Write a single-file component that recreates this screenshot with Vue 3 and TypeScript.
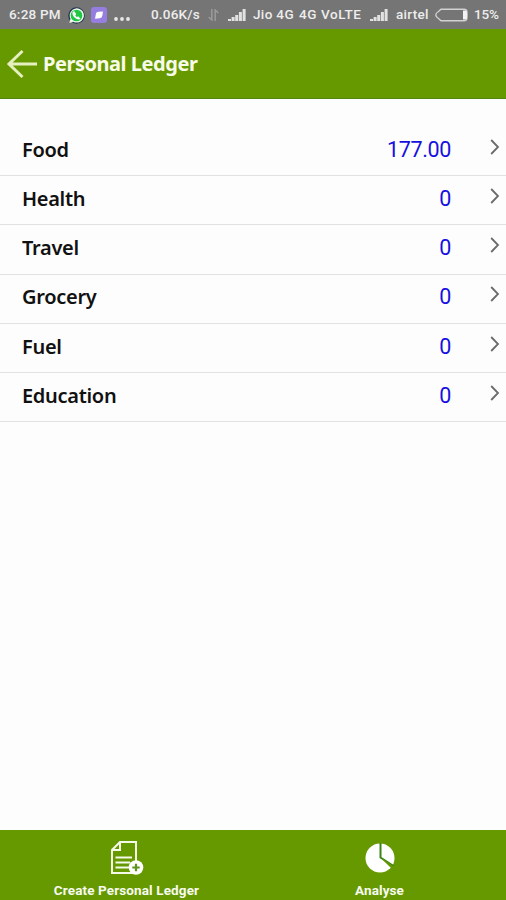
<script setup lang="ts">
interface LedgerEntry {
  name: string
  amount: string
}

const entries: LedgerEntry[] = [
  { name: 'Food', amount: '177.00' },
  { name: 'Health', amount: '0' },
  { name: 'Travel', amount: '0' },
  { name: 'Grocery', amount: '0' },
  { name: 'Fuel', amount: '0' },
  { name: 'Education', amount: '0' },
]
</script>

<template>
  <div class="screen">
    <div class="status">
      <span class="time">6:28 PM</span>
      <svg class="whatsapp" viewBox="0 0 16 16">
        <circle cx="8" cy="8" r="7.8" fill="#26334d" />
        <path d="M1.3 15l1-4A6.7 6.7 0 1 1 5 13.8z" fill="#e9fbec" />
        <circle cx="8" cy="8" r="5.5" fill="#20c743" />
        <path d="M4.800 4.200c-1.500 1.500-.2 4.200 1.500 5.700s4.200 2.700 5.500 1.100l-2.200-2.200-1.200.6c-.7-.4-1.200-.9-1.500-1.500l.8-1.400-1.800-2.400z" fill="#fff" />
      </svg>
      <svg class="app" viewBox="0 0 16 16">
        <rect width="16" height="16" rx="3" fill="#957ee0" />
        <path d="M4 11.800l.8-4.400a2.800 2.800 0 0 1 2.800-2.600l4.400-.4-.7 4.300a2.800 2.800 0 0 1-2.600 2.600z" fill="#fff" />
      </svg>
      <svg class="dots" viewBox="0 0 16 4" fill="#e8e8e8">
        <circle cx="2" cy="2" r="1.900" /><circle cx="8" cy="2" r="1.900" /><circle cx="14" cy="2" r="1.900" />
      </svg>
      <span class="speed">0.06K/s</span>
      <svg class="transfer" viewBox="0 0 11 12" fill="none" stroke="#9b9b9b" stroke-width="1.500">
        <path d="M3.800 0v11L.7 8M7.200 12V1l3.100 3" />
      </svg>
      <svg class="signal first" viewBox="0 0 18 12" fill="#e2e2e2">
        <path d="M0 10h3v2H0zM3.600 8h3v4h-3zM7.200 6h3v6h-3zM10.900 3h3v9h-3zM14.600 0h3v12h-3z" />
      </svg>
      <span class="carrier">Jio 4G</span>
      <span class="network">4G VoLTE</span>
      <svg class="signal second" viewBox="0 0 18 12" fill="#e2e2e2">
        <path d="M0 10h3v2H0zM3.600 8h3v4h-3zM7.200 6h3v6h-3zM10.900 3h3v9h-3zM14.600 0h3v12h-3z" />
      </svg>
      <span class="airtel">airtel</span>
      <svg class="battery" viewBox="0 0 34 14">
        <path d="M6 1.200h23q3 0 3 3v5.600q0 3-3 3H6L3.500 10.500Q.8 9 .8 7t2.700-3.500z" fill="none" stroke="#d2d2d2" stroke-width="1.400" />
        <path d="M28 2.500h2.500q1.500 0 1.500 2v5q0 2-1.500 2H28z" fill="#f3f3f3" />
      </svg>
      <span class="percent">15%</span>
    </div>

    <header class="bar">
      <svg class="back" viewBox="0 0 32 30" fill="none" stroke="#e5efbf" stroke-width="3">
        <path d="M31 15H3M16.500 2L3 15l13.500 13" />
      </svg>
      <h1>Personal Ledger</h1>
    </header>

    <main class="list">
      <div v-for="entry in entries" :key="entry.name" class="row">
        <span class="name">{{ entry.name }}</span>
        <span class="amount">{{ entry.amount }}</span>
        <svg class="chevron" viewBox="0 0 10 16" fill="none" stroke="#6b6b6b" stroke-width="1.800">
          <path d="M1.200 1l6.800 7-6.800 7" />
        </svg>
      </div>
    </main>

    <footer class="tabs">
      <div class="tab">
        <svg class="document" viewBox="0 0 34 36">
          <path d="M10 2h16v31H2V10z" fill="none" stroke="#f4f9e9" stroke-width="2" />
          <path d="M2 10h8V2" fill="none" stroke="#f4f9e9" stroke-width="2" />
          <path d="M5.500 17.500H22M5.500 22.500H20M5.500 27.500H19" stroke="#f4f9e9" stroke-width="2" />
          <circle cx="26" cy="27.500" r="7.300" fill="#fff" />
          <path d="M26 23.800v7.400M22.300 27.500h7.400" stroke="#5f931b" stroke-width="2.200" />
        </svg>
        <span class="create">Create Personal Ledger</span>
      </div>
      <div class="tab">
        <svg class="pie" viewBox="0 0 30 30">
          <circle cx="15" cy="15" r="14.500" fill="#fff" />
          <path d="M15.500 0v14.500L28.500 23" fill="none" stroke="#398516" stroke-width="2" />
          <path d="M17.500 16.800l8 7.700 4.500 1.500v-2.200l-2-.8L18 16z" fill="#690" />
        </svg>
        <span class="analyse">Analyse</span>
      </div>
    </footer>
  </div>
</template>

<style>
body {
  margin: 0;
}
</style>

<style scoped>
.screen {
  width: 506px;
  height: 900px;
  display: flex;
  flex-direction: column;
  background: #fdfdfd;
  overflow: hidden;
}
svg {
  display: block;
  flex: none;
}
.status {
  height: 29px;
  flex: none;
  display: flex;
  align-items: center;
  box-sizing: border-box;
  padding: 1px 0 0 9px;
  background: #757575;
  color: #ededed;
  font: 500 13.500px/26px Roboto, sans-serif;
  letter-spacing: 0.200px;
  white-space: nowrap;
}
.status span {
  flex: none;
  padding-bottom: 2px;
}
.time { width: 59px; }
.whatsapp { width: 17px; height: 17px; }
.app { width: 16px; height: 16px; margin-left: 6px; }
.dots { width: 16px; height: 4px; margin: 8px 0 0 7px; }
.speed { width: 57px; margin-left: 21px; }
.transfer { width: 11px; height: 12px; }
.signal { width: 18px; height: 12px; }
.first { margin-left: 9px; }
.carrier { width: 46px; margin-left: 7px; letter-spacing: 0.350px; }
.network { width: 71px; letter-spacing: 0.600px; }
.airtel { width: 39px; margin-left: 8px; letter-spacing: 0.300px; }
.battery { width: 34px; height: 14px; }
.percent { margin-left: 5px; letter-spacing: -0.150px; }
.bar {
  height: 70px;
  flex: none;
  display: flex;
  align-items: center;
  box-sizing: border-box;
  padding-left: 6px;
  background: #690;
  border-bottom: 1px solid #568612;
}
.back { width: 32px; height: 30px; }
h1 {
  margin: 0 0 0 5px;
  color: #f8fbe9;
  font: 700 20px/28px "Noto Sans", sans-serif;
  letter-spacing: -0.460px;
}
.list {
  flex: 1;
  padding-top: 28px;
}
.row {
  height: 49.200px;
  display: flex;
  align-items: center;
  box-sizing: border-box;
  padding: 0 6px 2.500px 22px;
  border-bottom: 1px solid #e2e2e2;
}
.name {
  flex: 1;
  color: #111;
  font: 600 20px/28px "Noto Sans", sans-serif;
  letter-spacing: -0.300px;
}
.amount {
  color: #1510e0;
  font: 400 21.500px/28px Roboto, sans-serif;
  letter-spacing: -0.350px;
}
.chevron { width: 10px; height: 16px; margin: -6px 0 0 39px; }
.tabs {
  height: 70px;
  flex: none;
  display: grid;
  grid-template-columns: 1fr 1fr;
  background: #690;
}
.tab {
  display: flex;
  flex-direction: column;
  align-items: center;
  color: #f8fbef;
  font: 700 13.500px/18px Roboto, sans-serif;
}
.create { letter-spacing: 0.120px; }
.analyse { letter-spacing: 0.100px; }
.document { width: 34px; height: 36px; margin: 10px 0 5px; }
.pie { width: 30px; height: 30px; margin: 13px 0 8px; }
</style>
